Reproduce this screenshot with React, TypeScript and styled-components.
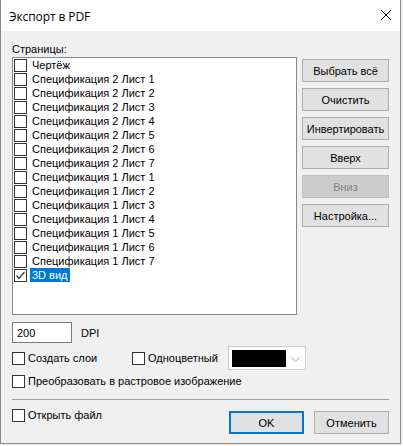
import React from "react";
import styled, { createGlobalStyle } from "styled-components";

const Global = createGlobalStyle`
  html, body { margin: 0; padding: 0; background: #f0f0f0; }
  body { width: 403px; height: 446px; overflow: hidden; }
`;

const Window = styled.div`
  box-sizing: border-box;
  width: 401px;
  height: 444px;
  border: 1px solid #8a8a8a;
  border-top: none;
  background: #f0f0f0;
  font-family: "Liberation Sans", Arial, sans-serif;
  font-size: 11px;
  color: #000;
  display: flex;
  flex-direction: column;
`;

const TitleBar = styled.div`
  height: 31px;
  background: #fff;
  display: flex;
  align-items: center;
  justify-content: space-between;
  padding: 0 9px 0 8px;
  font-family: "Open Sans", "Noto Sans", sans-serif;
  font-size: 12px;
`;

const Title = styled.span`
  padding-top: 1px;
  letter-spacing: -0.1px;
`;

const Close = styled.div`
  width: 10px;
  height: 10px;
  display: flex;
  margin-top: -1px;
`;

const Content = styled.div`
  padding: 0 11px;
  display: flex;
  flex-direction: column;
`;

const Label = styled.div`
  margin-top: 12px;
  line-height: 13px;
  height: 13px;
`;

const MainRow = styled.div`
  display: flex;
  gap: 5px;
  margin-top: 1px;
`;

const List = styled.div`
  box-sizing: border-box;
  width: 294px;
  height: 258px;
  border: 1px solid #828790;
  background: #fff;
  padding: 0 1px;
`;

const Row = styled.div`
  height: 14px;
  display: flex;
  align-items: flex-start;
`;

const Box = styled.span`
  box-sizing: border-box;
  flex: none;
  width: 13px;
  height: 13px;
  border: 1px solid #333;
  background: #fff;
  display: flex;
  align-items: center;
  justify-content: center;
`;

const RowBox = styled(Box)`
  margin-top: 1px;
`;

const ItemText = styled.span<{ $selected?: boolean }>`
  margin-left: 3px;
  padding: 0 2px;
  height: 14px;
  line-height: 14px;
  white-space: nowrap;
  background: ${(p) => (p.$selected ? "#0078d7" : "transparent")};
  color: ${(p) => (p.$selected ? "#fff" : "#000")};
`;

const Buttons = styled.div`
  display: flex;
  flex-direction: column;
  gap: 6px;
  padding-top: 2px;
`;

const Button = styled.button<{ $w?: number; $default?: boolean }>`
  box-sizing: border-box;
  width: ${(p) => p.$w ?? 87}px;
  height: 23px;
  padding: 0;
  margin: 0;
  font-family: "Liberation Sans", Arial, sans-serif;
  font-size: 11px;
  color: #000;
  background: #e1e1e1;
  border: ${(p) => (p.$default ? "2px solid #0078d7" : "1px solid #adadad")};
  border-radius: 0;
  outline: none;
  &:disabled {
    background: #cccccc;
    border-color: #bfbfbf;
    color: #838383;
  }
`;

const DpiRow = styled.div`
  display: flex;
  align-items: center;
  margin-top: 7px;
`;

const Input = styled.div`
  box-sizing: border-box;
  width: 60px;
  height: 21px;
  border: 1px solid #7a7a7a;
  background: #fff;
  padding-left: 4px;
  display: flex;
  align-items: center;
`;

const DpiLabel = styled.span`
  margin-left: 9px;
`;

const OptionsRow = styled.div`
  display: flex;
  align-items: center;
  height: 24px;
  margin-top: 3px;
`;

const Option = styled.label<{ $w?: number }>`
  display: flex;
  align-items: center;
  gap: 3px;
  ${(p) => (p.$w ? `width: ${p.$w}px;` : "")}
  white-space: nowrap;
  line-height: 13px;
`;

const Combo = styled.div`
  box-sizing: border-box;
  width: 78px;
  height: 24px;
  border: 1px solid #cccccc;
  background: #fff;
  padding: 3px;
  display: flex;
  align-items: flex-start;
`;

const Swatch = styled.div`
  width: 54px;
  height: 17px;
  background: #000;
`;

const Chevron = styled.div`
  margin: 7px 0 0 5px;
  display: flex;
`;

const RasterRow = styled.div`
  margin-top: 5px;
  display: flex;
`;

const Separator = styled.div`
  margin-top: 11px;
  width: 377px;
  height: 1px;
  background: #a0a0a0;
`;

const BottomRow = styled.div`
  width: 377px;
  display: flex;
  justify-content: space-between;
  align-items: flex-start;
  margin-top: 9px;
`;

const Dialog = styled.div`
  display: flex;
  gap: 10px;
  margin-top: 2px;
`;

const Check = ({ checked }: { checked?: boolean }) =>
  checked ? (
    <svg width="11" height="11" viewBox="0 0 11 11">
      <path d="M1.5 5.5 L4 8.5 L9.5 2" fill="none" stroke="#333" strokeWidth="1.2" />
    </svg>
  ) : null;

const items = [
  "Чертёж",
  "Спецификация 2 Лист 1",
  "Спецификация 2 Лист 2",
  "Спецификация 2 Лист 3",
  "Спецификация 2 Лист 4",
  "Спецификация 2 Лист 5",
  "Спецификация 2 Лист 6",
  "Спецификация 2 Лист 7",
  "Спецификация 1 Лист 1",
  "Спецификация 1 Лист 2",
  "Спецификация 1 Лист 3",
  "Спецификация 1 Лист 4",
  "Спецификация 1 Лист 5",
  "Спецификация 1 Лист 6",
  "Спецификация 1 Лист 7",
];

export default function App() {
  return (
    <>
      <Global />
      <Window>
        <TitleBar>
          <Title>Экспорт в PDF</Title>
          <Close>
            <svg width="10" height="10" viewBox="0 0 10 10">
              <path d="M0 0 L10 10 M10 0 L0 10" stroke="#000" strokeWidth="1" />
            </svg>
          </Close>
        </TitleBar>
        <Content>
          <Label>Страницы:</Label>
          <MainRow>
            <List>
              {items.map((t) => (
                <Row key={t}>
                  <RowBox />
                  <ItemText>{t}</ItemText>
                </Row>
              ))}
              <Row>
                <RowBox>
                  <Check checked />
                </RowBox>
                <ItemText $selected>3D вид</ItemText>
              </Row>
            </List>
            <Buttons>
              <Button>Выбрать всё</Button>
              <Button>Очистить</Button>
              <Button>Инвертировать</Button>
              <Button>Вверх</Button>
              <Button disabled>Вниз</Button>
              <Button>Настройка...</Button>
            </Buttons>
          </MainRow>
          <DpiRow>
            <Input>200</Input>
            <DpiLabel>DPI</DpiLabel>
          </DpiRow>
          <OptionsRow>
            <Option $w={120}>
              <Box />
              Создать слои
            </Option>
            <Option $w={96}>
              <Box />
              Одноцветный
            </Option>
            <Combo>
              <Swatch />
              <Chevron>
                <svg width="9" height="5" viewBox="0 0 9 5">
                  <path d="M0.5 0.5 L4.5 4.5 L8.5 0.5" fill="none" stroke="#a0a0a0" strokeWidth="1" />
                </svg>
              </Chevron>
            </Combo>
          </OptionsRow>
          <RasterRow>
            <Option>
              <Box />
              Преобразовать в растровое изображение
            </Option>
          </RasterRow>
          <Separator />
          <BottomRow>
            <Option>
              <Box />
              Открыть файл
            </Option>
            <Dialog>
              <Button $w={75} $default>
                OK
              </Button>
              <Button $w={75}>Отменить</Button>
            </Dialog>
          </BottomRow>
        </Content>
      </Window>
    </>
  );
}
